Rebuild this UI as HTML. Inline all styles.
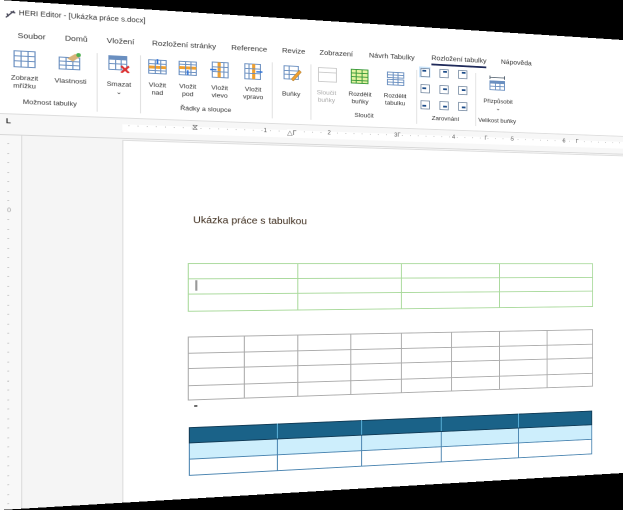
<!DOCTYPE html>
<html><head><meta charset="utf-8"><style>
html,body{margin:0;padding:0;background:#000;width:623px;height:510px;overflow:hidden}
#w{position:absolute;left:0;top:0;width:623px;height:510px;background:#fff;transform-origin:0 0;
transform:matrix3d(1.17783,0.07562,0,0.0002854,0,1,0,0,0,0,1,0,0,0,0,1);overflow:hidden;
font-family:"Liberation Sans",sans-serif;color:#333}
.a{position:absolute;white-space:nowrap}
.t{font-size:7.5px;color:#333}
.l{font-size:6.5px;color:#333;text-align:center;line-height:8px}
.g{color:#aaa}
.sep{position:absolute;width:1px;background:#e2e2e2;top:48px;height:60px}
.r{position:absolute;top:119px;font-size:6px;color:#555}
table{border-collapse:collapse;position:absolute;table-layout:fixed}
td{padding:0}
</style></head><body>
<div id="w">
<!-- title bar -->
<svg class="a" style="left:4px;top:8px" width="10" height="10"><path d="M1 9 L8 2 M3 8 L2 5 M5 3 L9 4" stroke="#445" stroke-width="1.2" fill="none"/></svg>
<div class="a t" style="left:16px;top:9px;font-size:7px">HERI Editor - [Ukázka práce s.docx]</div>
<!-- tabs -->
<div class="a t" style="left:15px;top:30px">Soubor</div>
<div class="a t" style="left:56px;top:30px">Domů</div>
<div class="a t" style="left:93px;top:30px">Vložení</div>
<div class="a t" style="left:134px;top:30px">Rozložení stránky</div>
<div class="a t" style="left:208px;top:30px">Reference</div>
<div class="a t" style="left:257px;top:30px">Revize</div>
<div class="a t" style="left:294px;top:30px">Zobrazení</div>
<div class="a t" style="left:344px;top:30px">Návrh Tabulky</div>
<div class="a t" style="left:409px;top:29px">Rozložení tabulky</div>
<div class="a" style="left:409px;top:40px;width:59px;height:1.5px;background:#1f2a5a"></div>
<div class="a t" style="left:484px;top:29px">Nápověda</div>
<!-- ribbon -->
<svg class="a" style="left:11px;top:49px" width="20" height="18"><rect x="1" y="1" width="18" height="16" fill="#fff" stroke="#6a8fc0"/><path d="M1 6H19M1 11H19M7 1V17M13 1V17" stroke="#6a8fc0"/></svg>
<div class="a l" style="left:3px;top:74px;width:36px">Zobrazit<br>mřížku</div>
<svg class="a" style="left:50px;top:49px" width="22" height="18"><rect x="1" y="5" width="18" height="12" fill="#fff" stroke="#6a8fc0"/><path d="M1 9H19M1 13H19M7 5V17M13 5V17" stroke="#6a8fc0"/><path d="M8 6 L15 1 L20 3 L13 9Z" fill="#d9b27a"/><circle cx="18" cy="2" r="2" fill="#4caf50"/></svg>
<div class="a l" style="left:44px;top:75px;width:34px">Vlastnosti</div>
<div class="a l" style="left:4px;top:98px;width:78px">Možnost tabulky</div>
<div class="sep" style="left:84px"></div>
<svg class="a" style="left:94px;top:49px" width="20" height="18"><rect x="1" y="1" width="16" height="14" fill="#fff" stroke="#6a8fc0"/><rect x="1" y="1" width="16" height="4" fill="#6a8fc0"/><path d="M1 9H17M7 1V15M12 1V15" stroke="#6a8fc0"/><path d="M12 11L19 18M19 11L12 18" stroke="#d33" stroke-width="2"/></svg>
<div class="a l" style="left:89px;top:76px;width:30px">Smazat<br>⌄</div>
<div class="sep" style="left:123px"></div>
<svg class="a" style="left:130px;top:50px" width="18" height="18"><rect x="1" y="2" width="16" height="14" fill="#fff" stroke="#6a8fc0"/><rect x="1" y="8" width="16" height="3" fill="#f0a030"/><path d="M1 6H17M1 13H17M7 2V16M12 2V16" stroke="#6a8fc0"/><path d="M9 1V6" stroke="#2a6fd6" stroke-width="1.5"/></svg>
<svg class="a" style="left:158px;top:50px" width="18" height="18"><rect x="1" y="2" width="16" height="14" fill="#fff" stroke="#6a8fc0"/><rect x="1" y="7" width="16" height="3" fill="#f0a030"/><path d="M1 5H17M1 13H17M7 2V16M12 2V16" stroke="#6a8fc0"/><path d="M9 11V16" stroke="#2a6fd6" stroke-width="1.5"/></svg>
<svg class="a" style="left:188px;top:50px" width="18" height="18"><rect x="2" y="1" width="15" height="16" fill="#fff" stroke="#6a8fc0"/><rect x="7" y="1" width="3" height="16" fill="#f0a030"/><path d="M2 6H17M2 11H17M13 1V17" stroke="#6a8fc0"/><path d="M0 9H6" stroke="#2a6fd6" stroke-width="1.5"/></svg>
<svg class="a" style="left:220px;top:50px" width="18" height="18"><rect x="1" y="1" width="15" height="16" fill="#fff" stroke="#6a8fc0"/><rect x="8" y="1" width="3" height="16" fill="#f0a030"/><path d="M1 6H16M1 11H16M5 1V17" stroke="#6a8fc0"/><path d="M12 9H18" stroke="#2a6fd6" stroke-width="1.5"/></svg>
<div class="a l" style="left:126px;top:75px;width:26px">Vložit<br>nad</div>
<div class="a l" style="left:154px;top:75px;width:26px">Vložit<br>pod</div>
<div class="a l" style="left:184px;top:75px;width:26px">Vložit<br>vlevo</div>
<div class="a l" style="left:216px;top:75px;width:26px">Vložit<br>vpravo</div>
<div class="a l" style="left:156px;top:98px;width:56px">Řádky a sloupce</div>
<div class="sep" style="left:247px"></div>
<svg class="a" style="left:258px;top:50px" width="18" height="18"><rect x="1" y="1" width="14" height="14" fill="#fff" stroke="#6a8fc0"/><path d="M1 6H15M1 10H15M6 1V15" stroke="#6a8fc0"/><path d="M8 15L16 5L18 7L10 17Z" fill="#f0a030" stroke="#9a6a20" stroke-width=".5"/></svg>
<div class="a l" style="left:254px;top:78px;width:24px">Buňky</div>
<div class="sep" style="left:285px"></div>
<svg class="a" style="left:292px;top:50px" width="20" height="18"><rect x="1" y="1" width="18" height="15" fill="#fff" stroke="#ccc"/><path d="M1 6H19" stroke="#ccc"/></svg>
<div class="a l g" style="left:287px;top:75px;width:28px">Sloučit<br>buňky</div>
<svg class="a" style="left:325px;top:50px" width="20" height="18"><rect x="1" y="1" width="17" height="15" fill="#e4f3a0" stroke="#3a9a3a"/><path d="M1 5H18M1 9H18M1 13H18M6 1V16M12 1V16" stroke="#3a9a3a"/></svg>
<svg class="a" style="left:362px;top:50px" width="20" height="18"><rect x="1" y="2" width="17" height="6" fill="#fff" stroke="#6a8fc0"/><rect x="1" y="10" width="17" height="6" fill="#fff" stroke="#6a8fc0"/><path d="M1 5H18M1 13H18M7 2V16M12 2V16" stroke="#6a8fc0"/></svg>
<div class="a l" style="left:320px;top:75px;width:30px">Rozdělit<br>buňky</div>
<div class="a l" style="left:356px;top:75px;width:30px">Rozdělit<br>tabulku</div>
<div class="a l" style="left:324px;top:98px;width:30px">Sloučit</div>
<div class="sep" style="left:393px"></div>
<div class="a" style="left:396px;top:44px;width:12px;height:12px;background:#cde6fb"></div>
<svg class="a" style="left:397px;top:45px" width="52" height="50">
<g fill="#fff" stroke="#6a7f99" stroke-width=".8">
<rect x="1" y="1" width="9" height="9"/><rect x="21" y="1" width="9" height="9"/><rect x="41" y="1" width="9" height="9"/>
<rect x="1" y="19" width="9" height="9"/><rect x="21" y="19" width="9" height="9"/><rect x="41" y="19" width="9" height="9"/>
<rect x="1" y="37" width="9" height="9"/><rect x="21" y="37" width="9" height="9"/><rect x="41" y="37" width="9" height="9"/></g>
<g fill="#1e4d8a"><rect x="2.5" y="2.5" width="4" height="2"/><rect x="24.5" y="2.5" width="4" height="2"/><rect x="44.5" y="2.5" width="4" height="2"/>
<rect x="2.5" y="22" width="4" height="2"/><rect x="24.5" y="22" width="4" height="2"/><rect x="44.5" y="22" width="4" height="2"/>
<rect x="2.5" y="41.5" width="4" height="2"/><rect x="24.5" y="41.5" width="4" height="2"/><rect x="44.5" y="41.5" width="4" height="2"/></g></svg>
<div class="a l" style="left:404px;top:98px;width:40px">Zarovnání</div>
<div class="sep" style="left:456px"></div>
<svg class="a" style="left:471px;top:49px" width="18" height="18"><path d="M1 3H17M1 1V5M17 1V5" stroke="#345" stroke-width=".8"/><rect x="1" y="7" width="16" height="10" fill="#fff" stroke="#6a8fc0"/><rect x="1" y="7" width="16" height="3" fill="#6a8fc0"/><path d="M1 13H17M7 7V17M12 7V17" stroke="#6a8fc0"/></svg>
<div class="a l" style="left:462px;top:76px;width:38px">Přizpůsobit<br>⌄</div>
<div class="a l" style="left:456px;top:98px;width:48px">Velikost buňky</div>
<div class="a" style="left:0;top:113px;width:623px;height:1px;background:#ddd"></div>
<!-- ruler -->
<div class="a" style="left:0;top:114px;width:623px;height:20px;background:#f7f7f7;border-bottom:1px solid #d8d8d8"></div>
<div class="a" style="left:5px;top:118px;font-size:7px;font-weight:bold">L</div>
<div class="a" style="left:107px;top:120px;width:516px;height:8px;background:#fff"></div>
<div class="a" style="left:112px;top:119px;font-size:6px;color:#666;letter-spacing:6.3px">······································································</div>
<div class="r" style="left:171px;top:116px;font-size:8px">⧖</div>
<div class="r" style="left:239px;background:#fff">1</div>
<div class="r" style="left:262px;font-size:7px;background:#fff">△Г</div>
<div class="r" style="left:302px;background:#fff">2</div>
<div class="r" style="left:370px;background:#fff">3Г</div>
<div class="r" style="left:431px;background:#fff">4</div>
<div class="r" style="left:466px;background:#fff">Г</div>
<div class="r" style="left:495px;background:#fff">5</div>
<div class="r" style="left:553px;background:#fff">6</div>
<div class="r" style="left:568px;background:#fff">Г</div>
<!-- left vertical ruler & background -->
<div class="a" style="left:0;top:135px;width:623px;height:375px;background:#f5f5f5"></div>
<div class="a" style="left:0;top:135px;width:18px;height:375px;background:#f8f8f8;border-right:1px solid #ddd"></div>
<div class="a" style="left:6px;top:140px;font-size:6px;color:#999;line-height:9.5px">-<br>-<br>-<br>-<br>-<br>-<br>-<br>0<br>-<br>-<br>-<br>-<br>-<br>-<br>-<br>-<br>-<br>-<br>-<br>-<br>-<br>-<br>-<br>-<br>-<br>-<br>-<br>-<br>-<br>-<br>-<br>-<br>-<br>-<br>-<br>-<br>-<br>-<br>-</div>
<!-- page -->
<div class="a" style="left:107px;top:136px;width:530px;height:380px;background:#fff;border-left:1px solid #ddd;border-top:1px solid #ddd"></div>
<div class="a" style="left:172px;top:213px;font-size:10px;color:#3b2a1a">Ukázka práce s tabulkou</div>
<table style="left:167px;top:263px;width:421px">
<tr style="height:16px"><td style="border:1px solid #a8d99a"></td><td style="border:1px solid #a8d99a"></td><td style="border:1px solid #a8d99a"></td><td style="border:1px solid #a8d99a"></td></tr>
<tr style="height:16px"><td style="border:1px solid #a8d99a"></td><td style="border:1px solid #a8d99a"></td><td style="border:1px solid #a8d99a"></td><td style="border:1px solid #a8d99a"></td></tr>
<tr style="height:18px"><td style="border:1px solid #a8d99a"></td><td style="border:1px solid #a8d99a"></td><td style="border:1px solid #a8d99a"></td><td style="border:1px solid #a8d99a"></td></tr>
</table>
<div class="a" style="left:174px;top:281px;width:1.5px;height:11px;background:#999"></div>
<table style="left:167px;top:340px;width:421px">
<tr style="height:16.5px"><td style="border:1px solid #aaa"></td><td style="border:1px solid #aaa"></td><td style="border:1px solid #aaa"></td><td style="border:1px solid #aaa"></td><td style="border:1px solid #aaa"></td><td style="border:1px solid #aaa"></td><td style="border:1px solid #aaa"></td><td style="border:1px solid #aaa"></td></tr>
<tr style="height:16.5px"><td style="border:1px solid #aaa"></td><td style="border:1px solid #aaa"></td><td style="border:1px solid #aaa"></td><td style="border:1px solid #aaa"></td><td style="border:1px solid #aaa"></td><td style="border:1px solid #aaa"></td><td style="border:1px solid #aaa"></td><td style="border:1px solid #aaa"></td></tr>
<tr style="height:17.5px"><td style="border:1px solid #aaa"></td><td style="border:1px solid #aaa"></td><td style="border:1px solid #aaa"></td><td style="border:1px solid #aaa"></td><td style="border:1px solid #aaa"></td><td style="border:1px solid #aaa"></td><td style="border:1px solid #aaa"></td><td style="border:1px solid #aaa"></td></tr>
<tr style="height:15.5px"><td style="border:1px solid #aaa"></td><td style="border:1px solid #aaa"></td><td style="border:1px solid #aaa"></td><td style="border:1px solid #aaa"></td><td style="border:1px solid #aaa"></td><td style="border:1px solid #aaa"></td><td style="border:1px solid #aaa"></td><td style="border:1px solid #aaa"></td></tr>
</table>
<div class="a" style="left:173px;top:412px;width:3px;height:1.5px;background:#666"></div>
<table style="left:168px;top:435px;width:419px">
<tr style="height:16px;background:#1a6288"><td style="border:1px solid #103a55;border-right-color:#5ab0d8;width:83px"></td><td style="border:1px solid #103a55;border-right-color:#5ab0d8"></td><td style="border:1px solid #103a55;border-right-color:#5ab0d8"></td><td style="border:1px solid #103a55;border-right-color:#5ab0d8"></td><td style="border:1px solid #103a55"></td></tr>
<tr style="height:16.5px;background:#cdeefc"><td style="border:1px solid #4a84b0"></td><td style="border:1px solid #4a84b0"></td><td style="border:1px solid #4a84b0"></td><td style="border:1px solid #4a84b0"></td><td style="border:1px solid #4a84b0"></td></tr>
<tr style="height:17.5px;background:#fff"><td style="border:1px solid #4a84b0"></td><td style="border:1px solid #4a84b0"></td><td style="border:1px solid #4a84b0"></td><td style="border:1px solid #4a84b0"></td><td style="border:1px solid #4a84b0"></td></tr>
</table>
</div>
</body></html>
